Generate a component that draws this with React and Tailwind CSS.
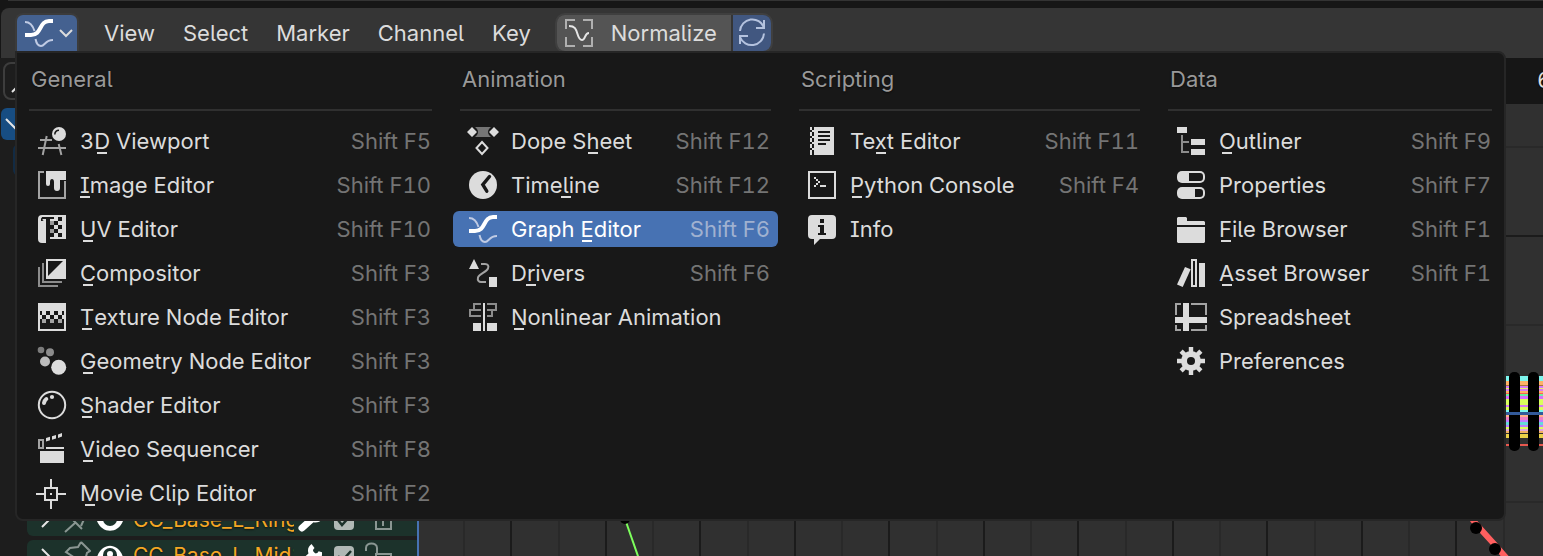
import React from "react";

const INK = "#dcdcdc";
const DIM = "#8c8c8c";
const HOLE = "#181818";

function Icon({ children, className = "" }) {
  return (
    <svg viewBox="0 0 32 32" className={"h-8 w-8 shrink-0 " + className} fill="none" aria-hidden="true">
      {children}
    </svg>
  );
}

const GraphIcon = () => (
  <Icon>
    <path d="M2 5c6 0 8 4 9.500 9" stroke="#c0cbe4" strokeWidth="2" />
    <path d="M12.500 22c1 5 3 7 5.500 7 4 0 4-6 12-6" stroke="#c0cbe4" strokeWidth="2" />
    <path d="M2 18h6C19 18 16 4 26 4h4" stroke="#fff" strokeWidth="4" />
  </Icon>
);

const icons = {
  viewport: (
    <Icon>
      <path d="M4 15h12M2 23h28M10.700 11 6.700 30M22.700 19l2.700 11" stroke="#a3a3a3" strokeWidth="2" />
      <circle cx="23" cy="9" r="7" fill={INK} />
      <path d="M18.800 9.500c0-2.600 1.700-4.300 4.200-4.300" stroke={HOLE} strokeWidth="1.500" />
    </Icon>
  ),
  image: (
    <Icon>
      <path d="M8 3H3v26h26V12" stroke="#a3a3a3" strokeWidth="2" />
      <path d="M10 2h20v9h-6v8a3 3 0 0 1-6 0v-6c0-2-.8-3-2-3s-2 1-2 3v2a2 2 0 0 1-4 0z" fill={INK} />
    </Icon>
  ),
  uv: (
    <Icon>
      <path d="M6 2h24v24H12v-2h2V8H8c-2 0-2-4 0-4h4V2z" fill={INK} />
      <path d="M6 2a4 4 0 0 0-4 4v20a4 4 0 0 0 4 4h4V8H5V6c0-1 1-2 2-2h5V2z" fill={INK} />
      <path d="M6 4h12v2H6zM10 6h4v20h-4z" fill={HOLE} />
      <path d="M14 8h4v4h-4zM14 16h4v4h-4z" fill="#9a9a9a" />
      <path d="M22 4h4v4h-4zM18 8h4v4h-4zM22 12h4v4h-4zM14 12h4v4h-4zM18 16h4v4h-4zM22 20h4v4h-4zM14 20h4v4h-4z" fill={HOLE} />
    </Icon>
  ),
  compositor: (
    <Icon>
      <path d="M3 10v19h19M7 6v19h19" stroke={DIM} strokeWidth="2" />
      <path d="M10 2h20v20H10z" fill={INK} />
      <path d="M12 4h15L12 19z" fill={HOLE} />
    </Icon>
  ),
  texture: (
    <Icon>
      <path d="M2 2h28v28H2z" fill={INK} />
      <path d="M4 18h24v10H4zM4 10h2v4H4zM10 10h4v4h-4zM18 10h4v4h-4zM26 10h2v4h-2zM6 14h4v4H6zM14 14h4v4h-4zM22 14h4v4h-4z" fill={HOLE} />
      <path d="M6 18h4v4H6zM14 18h4v4h-4zM22 18h4v4h-4z" fill="#a3a3a3" />
    </Icon>
  ),
  geometry: (
    <Icon>
      <circle cx="5" cy="5" r="3.300" fill="#7c7c7c" />
      <circle cx="14" cy="7.300" r="4" fill="#8c8c8c" />
      <circle cx="9" cy="16.500" r="5" fill="#bcbcbc" />
      <circle cx="22.700" cy="22.300" r="7.500" fill={INK} />
    </Icon>
  ),
  shader: (
    <Icon>
      <circle cx="16" cy="16" r="13.200" stroke={INK} strokeWidth="2" />
      <path d="M8 14c.3-2 1-3 2.300-4" stroke={INK} strokeWidth="4" strokeLinecap="round" />
      <circle cx="16" cy="8" r="2.100" fill={INK} />
    </Icon>
  ),
  sequencer: (
    <Icon>
      <path d="M3 7h4v8H3z" stroke="#a3a3a3" strokeWidth="2" />
      <path d="m10 5 4-1.300v3.600L10 8.500zM16 3.200l4-1.300v3.600l-4 1.300zM22 1.400 26 0v3.600l-4 1.300z" fill={INK} />
      <path d="M10 14h18v2H10zM4 18h24v12H4z" fill={INK} />
    </Icon>
  ),
  clip: (
    <Icon>
      <path d="M9 11h12v12H9zM15 2v9M15 23v9M0 17h9M21 17h9" stroke={INK} strokeWidth="2" />
      <path d="M14 16h2v2h-2z" fill={INK} />
    </Icon>
  ),
  dope: (
    <Icon>
      <path d="M8 2h16c-4 3-4 7 0 10H8c4-3 4-7 0-10z" fill="#757575" />
      <path d="m5 2 5 5-5 5-5-5zM27 2l5 5-5 5-5-5z" fill={INK} />
      <path d="m15 17 5.500 6-5.500 6-5.500-6z" stroke={INK} strokeWidth="2" />
    </Icon>
  ),
  timeline: (
    <Icon>
      <circle cx="16" cy="16" r="14" fill={INK} />
      <path d="m22.500 7.500-6.700 8.200 4 6.500" stroke={HOLE} strokeWidth="3.400" strokeLinecap="round" />
    </Icon>
  ),
  graph: <GraphIcon />,
  drivers: (
    <Icon>
      <path d="M14 7h4c3 0 4 2 3 4.500-1.500 3.500-9 5.500-10 9-.8 3 1 4.500 3 4.500h5" stroke="#a3a3a3" strokeWidth="2" />
      <path d="m7 2 5 10H2zM22 20h8v10h-8z" fill={INK} />
    </Icon>
  ),
  nla: (
    <Icon>
      <path d="M14 3H7v6H3v6h11M7 9h7M20 3h9v6h-9M25 9v6h-5" stroke={DIM} strokeWidth="2" />
      <path d="M16 2h2v28h-2zM6 22h8v8H6zM20 22h10v8H20z" fill={INK} />
    </Icon>
  ),
  text: (
    <Icon>
      <path d="M4 2h24v28H4z" fill={INK} />
      <path d="M6 2h2v3H6zM6 7h2v4H6zM6 13h2v4H6zM6 19h2v4H6zM6 25h2v5H6zM4 5h2v2H4zM4 11h2v2H4zM4 17h2v2H4zM4 23h2v2H4z" fill={HOLE} />
      <path d="M12 6h12v2H12zM12 10h12v2H12zM12 14h12v2H12zM12 18h8v2h-8z" fill={HOLE} />
    </Icon>
  ),
  console: (
    <Icon>
      <path d="M3 3h26v26H3z" stroke={INK} strokeWidth="2" />
      <path d="M8 8h2v2H8zM10 10h2v2h-2zM12 12h2v2h-2zM10 14h2v2h-2zM8 16h2v2H8zM14 16h6v2h-6z" fill={INK} />
    </Icon>
  ),
  info: (
    <Icon>
      <path d="M6 2h20a4 4 0 0 1 4 4v16a4 4 0 0 1-4 4H14l-6 6v-6H6a4 4 0 0 1-4-4V6a4 4 0 0 1 4-4z" fill={INK} />
      <path d="M14 6h4v4h-4zM12 12h6v8h2v2h-8v-2h2v-6h-2z" fill={HOLE} />
    </Icon>
  ),
  outliner: (
    <Icon>
      <path d="M7 10v17h7M7 17h7" stroke={DIM} strokeWidth="2" />
      <path d="M2 2h10v6H2zM16 14h14v6H16zM16 24h14v6H16z" fill={INK} />
    </Icon>
  ),
  properties: (
    <Icon>
      <rect x="2" y="2" width="28" height="12" rx="5" fill={INK} />
      <rect x="2" y="18" width="28" height="12" rx="5" fill={INK} />
      <path d="M14 4h11a3 3 0 0 1 3 3v2a3 3 0 0 1-3 3H14zM20 20h5a3 3 0 0 1 3 3v2a3 3 0 0 1-3 3h-5z" fill={HOLE} />
    </Icon>
  ),
  file: (
    <Icon>
      <path d="M3 4h8l1 1v3h17l1 1v3H2V5zM2 14h28v15l-1 1H3l-1-1z" fill={INK} />
    </Icon>
  ),
  asset: (
    <Icon>
      <path d="m10 10 5.700 2.300L7.700 30 2 27.500z" fill={INK} />
      <path d="M17 3h4v26h-4z" stroke={INK} strokeWidth="2" />
      <path d="M24 6h6v24h-6z" fill={INK} />
    </Icon>
  ),
  sheet: (
    <Icon>
      <path d="M6 3H1v11M16 3h15v11M1 24v5h5M16 29h15v-5" stroke="#a3a3a3" strokeWidth="2" />
      <path d="M8 2h6v28H8zM0 16h32v6H0z" fill={INK} />
    </Icon>
  ),
  gear: (
    <Icon>
      <path d="M16 2v28M2 16h28M6.100 6.100l19.800 19.800M25.900 6.100 6.100 25.900" stroke={INK} strokeWidth="4.400" />
      <circle cx="16" cy="16" r="7" stroke={INK} strokeWidth="6" />
      <circle cx="16" cy="16" r="4" fill={HOLE} />
    </Icon>
  ),
};

// An ampersand in a label marks the accelerator letter that follows it.
const columns = [
  {
    title: "General",
    items: [
      ["viewport", "3&D Viewport", "Shift F5"],
      ["image", "&Image Editor", "Shift F10"],
      ["uv", "&UV Editor", "Shift F10"],
      ["compositor", "&Compositor", "Shift F3"],
      ["texture", "&Texture Node Editor", "Shift F3"],
      ["geometry", "&Geometry Node Editor", "Shift F3"],
      ["shader", "&Shader Editor", "Shift F3"],
      ["sequencer", "&Video Sequencer", "Shift F8"],
      ["clip", "&Movie Clip Editor", "Shift F2"],
    ],
  },
  {
    title: "Animation",
    items: [
      ["dope", "Dope S&heet", "Shift F12"],
      ["timeline", "Time&line", "Shift F12"],
      ["graph", "Graph &Editor", "Shift F6"],
      ["drivers", "D&rivers", "Shift F6"],
      ["nla", "&Nonlinear Animation", ""],
    ],
  },
  {
    title: "Scripting",
    items: [
      ["text", "Te&xt Editor", "Shift F11"],
      ["console", "&Python Console", "Shift F4"],
      ["info", "Info", ""],
    ],
  },
  {
    title: "Data",
    items: [
      ["outliner", "&Outliner", "Shift F9"],
      ["properties", "Properties", "Shift F7"],
      ["file", "&File Browser", "Shift F1"],
      ["asset", "&Asset Browser", "Shift F1"],
      ["sheet", "Spreadsheet", ""],
      ["gear", "Preferences", ""],
    ],
  },
];

function Label({ text }) {
  const at = text.indexOf("&");
  if (at < 0) return <span>{text}</span>;
  return (
    <span>
      {text.slice(0, at)}
      <span className="relative after:absolute after:bottom-0 after:left-1/2 after:h-0.5 after:w-2.5 after:-translate-x-1/2 after:bg-current">
        {text[at + 1]}
      </span>
      {text.slice(at + 2)}
    </span>
  );
}

function MenuItem({ icon, label, keys }) {
  const active = icon === "graph";
  return (
    <button
      role="menuitem"
      className={
        "flex h-9 w-full items-center rounded-md pr-2 pl-3.5 text-left whitespace-nowrap " +
        (active ? "bg-[#4772b3] text-white" : "text-[#dcdcdc]")
      }
    >
      {icons[icon]}
      <span className="ml-3">
        <Label text={label} />
      </span>
      <span className={"ml-auto " + (active ? "text-[#a0b1d0]" : "text-[#747474]")}>{keys}</span>
    </button>
  );
}

function EditorMenu() {
  return (
    <div
      role="menu"
      className="absolute top-full -left-0.5 z-10 grid w-max grid-cols-[417px_325px_355px_338px] gap-x-3.5 rounded-lg rounded-tl-none border-2 border-[#262626] bg-[#181818] px-[5px] py-2"
    >
      {columns.map((c) => (
        <section key={c.title}>
          <h2 className="flex h-9 items-center px-[9px] text-[#999999]">{c.title}</h2>
          <hr className="mx-[7px] my-3 border-t-2 border-[#303030]" />
          <div className="flex flex-col gap-2">
            {c.items.map(([icon, label, keys]) => (
              <MenuItem key={label} icon={icon} label={label} keys={keys} />
            ))}
          </div>
        </section>
      ))}
    </div>
  );
}

function Header() {
  return (
    <header className="ml-px flex h-[50px] items-start rounded-tl-lg bg-[#353535] pt-[7px] pl-4 text-[#dcdcdc]">
      <div className="relative shrink-0">
        <button aria-label="Editor type" className="flex h-9 w-[60px] items-center rounded-t-md bg-[#446190] pl-1.5 ring-2 ring-[#3b3b3b]">
          <GraphIcon />
          <svg viewBox="0 0 14 10" className="ml-1 h-2.5 w-3.5" fill="none" aria-hidden="true">
            <path d="m1 2 6 6 6-6" stroke="#dcdcdc" strokeWidth="2" />
          </svg>
        </button>
        <EditorMenu />
      </div>
      <nav className="ml-[27px] flex h-9 items-center gap-7">
        {["View", "Select", "Marker", "Channel", "Key"].map((m) => (
          <button key={m}>{m}</button>
        ))}
      </nav>
      <div className="ml-[26px] flex h-9 gap-0.5 rounded-lg ring-2 ring-[#3f3f3f]">
        <button className="flex items-center rounded-l-lg bg-[#545454] px-3.5 pl-1.5">
          <Icon>
            <path d="M12 3H3v9M20 3h9v9M3 20v9h9M29 20v9h-9" stroke="#b0b0b0" strokeWidth="2" />
            <path d="M6 9c6 0 7 3 8.500 8 1.200 4 2.500 6 4.500 6 3.500 0 2.500-7 7-7" stroke="#e6e6e6" strokeWidth="2" />
          </Icon>
          <span className="ml-4">Normalize</span>
        </button>
        <button aria-label="Auto normalization" className="flex w-[38px] items-center justify-center rounded-r-lg bg-[#415780]">
          <Icon>
            <path d="M4 14A12.400 12.400 0 0 1 28 10.500M28 3v8h-8M28 16.500A12.400 12.400 0 0 1 4 20M4 27v-8h8" stroke="#b4c2de" strokeWidth="2" />
          </Icon>
        </button>
      </div>
    </header>
  );
}

function ChannelRow({ name, open }) {
  return (
    <div className="ml-[27px] flex h-8 shrink-0 items-center rounded-l-md bg-[#1c322b] pl-3.5">
      <svg viewBox="0 0 10 18" className="h-[18px] w-2.5" fill="none" aria-hidden="true">
        <path d="m1 2 7 7-7 7" stroke="#e6e6e6" strokeWidth="2" />
      </svg>
      <svg viewBox="0 0 28 32" className="ml-3 h-8 w-7" fill="none" aria-hidden="true">
        {open ? (
          <path d="m18 2 9 9-3 2-2 7-4 4-6-6-8 8M18 2l-3 5-8 1-4 4 9 6" stroke="#8a9692" strokeWidth="2" />
        ) : (
          <path d="m2 28 10-9M5 11l14 14M10 12l8-6M18 22l4-9" stroke="#8a9692" strokeWidth="2" />
        )}
      </svg>
      <svg viewBox="0 0 26 24" className="ml-1.5 h-6 w-[26px]" fill="none" aria-hidden="true">
        <path d="M0 13C5-2 21-2 26 13 21 26 5 26 0 13z" fill="#fff" />
        <circle cx="13" cy="11" r="7" fill="#1c322b" />
        <circle cx="13" cy="10" r="3" fill="#fff" />
      </svg>
      <span className="ml-2.5 w-[161px] overflow-hidden text-[21px] whitespace-nowrap text-[#f5a623]">{name}</span>
      <svg viewBox="0 0 24 24" className="ml-1 h-6 w-6" fill="none" aria-hidden="true">
        <path d="M4 20 14 11" stroke="#fff" strokeWidth="7" strokeLinecap="round" />
        <path d="M15 2c-4 3-3 9 2 10 3 0 5-1 6-4" stroke="#fff" strokeWidth="5" />
      </svg>
      <label className="relative ml-3 flex">
        <input type="checkbox" defaultChecked aria-label={name} className="h-5 w-5 appearance-none rounded-sm bg-[#b0b8b5]" />
        <svg viewBox="0 0 20 20" className="pointer-events-none absolute inset-0 h-5 w-5" fill="none" aria-hidden="true">
          <path d="m4 10 4 5 9-10" stroke="#1c322b" strokeWidth="2.500" />
        </svg>
      </label>
      <svg viewBox="0 0 30 28" className="ml-2.5 h-7 w-[30px]" fill="none" aria-hidden="true">
        <path d="M2 9V6c0-6 11-6 11 0v5M12 12h15v11H12zM19 15v5" stroke="#8a9692" strokeWidth="2" />
      </svg>
    </div>
  );
}

function Channels() {
  return (
    <aside className="flex w-[417px] shrink-0 flex-col bg-[#1d1d1d] pt-1">
      <div className="mx-[3px] flex h-[38px] shrink-0 items-center rounded-lg border-2 border-[#3d3d3d] pl-1.5">
        <svg viewBox="0 0 24 24" className="h-6 w-6 shrink-0" fill="none" aria-hidden="true">
          <path d="m1 23 8-8" stroke="#e6e6e6" strokeWidth="2" />
          <circle cx="15" cy="9" r="7" stroke="#e6e6e6" strokeWidth="2" />
        </svg>
        <input type="search" aria-label="Search channels" className="w-full bg-transparent outline-none" />
      </div>
      <div className="mt-2 ml-px flex h-8 shrink-0 items-center rounded-l-md bg-[#174d82] pl-1">
        <svg viewBox="0 0 20 12" className="h-3 w-5" fill="none" aria-hidden="true">
          <path d="m1 1 9 9 9-9" stroke="#e6e6e6" strokeWidth="2" />
        </svg>
      </div>
      <div className="mt-1 ml-[13px] h-8 shrink-0 rounded-l-md bg-[#122b44]" />
      <div className="mt-[328px] flex flex-col gap-1">
        <ChannelRow name="CC_Base_L_Ring1" />
        <ChannelRow name="CC_Base_L_Mid1" open />
      </div>
    </aside>
  );
}

// Curve bundle bands: [top, height, colour].
const bands = [
  [0, 5, "#7df6ee"], [5, 4, "#ffb266"], [9, 1, "#a8743c"], [10, 2, "#d77cf5"], [12, 1, "#e9f56a"],
  [13, 2, "#d77cf5"], [15, 2, "#ffb266"], [17, 1, "#ff5f52"], [18, 2, "#6cf2a0"], [20, 3, "#d86cff"],
  [23, 6, "#d9ff5c"], [29, 2, "#d77cf5"], [31, 3, "#d9ff5c"], [34, 2, "#7df6ee"], [39, 2, "#ffb28a"],
  [41, 3, "#ef7fc8"], [44, 2, "#c07cff"], [46, 3, "#66d9d9"], [49, 2, "#c07cff"], [51, 2, "#d9ff5c"],
  [53, 2, "#e3a6d8"], [55, 2, "#f0b060"], [58, 4, "#ead048"], [68, 2, "#e8584f"],
];

function Graph() {
  const verticals = Array.from({ length: 26 }, (_, i) => 47 + i * 47.25);
  return (
    <main className="relative flex min-w-0 flex-1 flex-col overflow-hidden bg-[#303030]">
      <div className="relative h-[46px] shrink-0 bg-[#161616] text-[#dcdcdc]">
        <span className="absolute top-2 left-[1120px]">60</span>
      </div>
      <svg className="h-[452px] w-full shrink-0" shapeRendering="crispEdges" aria-hidden="true">
        {verticals.map((x, i) => (
          <rect key={x} x={x - 1} y="0" width="2" height="452" fill={i % 2 ? "#1b1b1b" : "#292929"} />
        ))}
        <rect y="42" width="100%" height="2" fill="#292929" />
        <rect y="131" width="100%" height="2" fill="#1b1b1b" />
        <rect y="220" width="100%" height="2" fill="#292929" />
        <rect y="397" width="100%" height="2" fill="#292929" />
        <rect width="2" height="452" fill="#4772b3" />
        <g shapeRendering="auto">
          <path d="m208 415 14 40" stroke="#7dff5c" strokeWidth="2" />
          <circle cx="208" cy="415" r="5" fill="#000" />
          <path d="m1050 408 9 12 19 21 14 16" stroke="#ff5f5f" strokeWidth="6" fill="none" />
          <circle cx="1059" cy="424" r="6" fill="#000" />
          <circle cx="1078" cy="445" r="6" fill="#000" />
        </g>
        <g transform="translate(1080 272)">
          {bands.map(([y, h, c]) => (
            <rect key={y} y={y} width="60" height={h} fill={c} />
          ))}
          <g fill="#000" shapeRendering="auto">
            <rect x="12" y="-4" width="11" height="79" rx="5" />
            <rect x="31" y="-4" width="11" height="79" rx="5" />
          </g>
          <rect y="36" width="60" height="3" fill="#335a9a" />
        </g>
      </svg>
    </main>
  );
}

export default function App() {
  return (
    <div className="flex h-screen flex-col overflow-hidden bg-[#161616] font-['Inter',sans-serif] text-[22px] leading-7 [font-feature-settings:'cv05','cv08','tnum'] [text-shadow:0_1px_2px_rgba(0,0,0,0.6)]">
      <div className="ml-2 h-2 shrink-0 border-t border-[#333333]" />
      <Header />
      <div className="flex min-h-0 flex-1 overflow-hidden">
        <Channels />
        <Graph />
      </div>
    </div>
  );
}
